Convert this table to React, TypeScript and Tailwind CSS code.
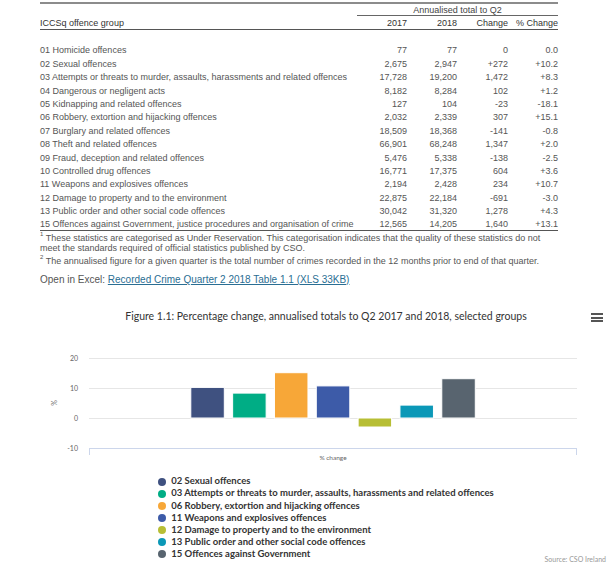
import React from "react";

const rows = [
  ["01 Homicide offences", "77", "77", "0", "0.0"],
  ["02 Sexual offences", "2,675", "2,947", "+272", "+10.2"],
  ["03 Attempts or threats to murder, assaults, harassments and related offences", "17,728", "19,200", "1,472", "+8.3"],
  ["04 Dangerous or negligent acts", "8,182", "8,284", "102", "+1.2"],
  ["05 Kidnapping and related offences", "127", "104", "-23", "-18.1"],
  ["06 Robbery, extortion and hijacking offences", "2,032", "2,339", "307", "+15.1"],
  ["07 Burglary and related offences", "18,509", "18,368", "-141", "-0.8"],
  ["08 Theft and related offences", "66,901", "68,248", "1,347", "+2.0"],
  ["09 Fraud, deception and related offences", "5,476", "5,338", "-138", "-2.5"],
  ["10 Controlled drug offences", "16,771", "17,375", "604", "+3.6"],
  ["11 Weapons and explosives offences", "2,194", "2,428", "234", "+10.7"],
  ["12 Damage to property and to the environment", "22,875", "22,184", "-691", "-3.0"],
  ["13 Public order and other social code offences", "30,042", "31,320", "1,278", "+4.3"],
  ["15 Offences against Government, justice procedures and organisation of crime", "12,565", "14,205", "1,640", "+13.1"],
];

const series = [
  { name: "02 Sexual offences", value: 10.2, color: "#3f5180" },
  { name: "03 Attempts or threats to murder, assaults, harassments and related offences", value: 8.3, color: "#00ad85" },
  { name: "06 Robbery, extortion and hijacking offences", value: 15.1, color: "#f7a738" },
  { name: "11 Weapons and explosives offences", value: 10.7, color: "#3d5ba8" },
  { name: "12 Damage to property and to the environment", value: -3.0, color: "#b7be35" },
  { name: "13 Public order and other social code offences", value: 4.3, color: "#0b98b7" },
  { name: "15 Offences against Government", value: 13.1, color: "#58646f" },
];

const grid = "grid grid-cols-[317px_50px_50px_51px_50px]";

function CrimeTable() {
  return (
    <div className="w-[518px] text-[9px] text-[#555] font-['Liberation_Sans',Arial,sans-serif]">
      <div className="mt-[2px] border-t-2 border-[#8c8c8c]" />
      <div className={grid}>
        <div />
        <div className="col-span-4 h-[12px] border-b border-[#666] text-center leading-[12px] text-[#444]">
          Annualised total to Q2
        </div>
      </div>
      <div className={`${grid} h-[14px] items-end border-b border-[#555] text-[#333] leading-[11px]`}>
        <div>ICCSq offence group</div>
        <div className="text-right">2017</div>
        <div className="text-right">2018</div>
        <div className="text-right">Change</div>
        <div className="text-right">% Change</div>
      </div>
      <div className="h-[13px]" />
      <div className="border-b border-[#555]">
        {rows.map((r) => (
          <div key={r[0]} className={`${grid} h-[13.4px] items-end leading-[12px]`}>
            <div className="whitespace-nowrap">{r[0]}</div>
            <div className="text-right">{r[1]}</div>
            <div className="text-right">{r[2]}</div>
            <div className="text-right">{r[3]}</div>
            <div className="text-right">{r[4]}</div>
          </div>
        ))}
      </div>
      <p className="mt-[1.5px] leading-[10px]">
        <sup className="text-[6px] leading-none align-[2px]">1</sup> These statistics are categorised as Under
        Reservation. This categorisation indicates that the quality of these statistics do not meet the standards
        required of official statistics published by CSO.
      </p>
      <p className="mt-[3px] leading-[10px]">
        <sup className="text-[6px] leading-none align-[2px]">2</sup> The annualised figure for a given quarter is the
        total number of crimes recorded in the 12 months prior to end of that quarter.
      </p>
      <p className="mt-[7px] text-[10px] leading-[13px] whitespace-nowrap">
        Open in Excel:{" "}
        <a href="#" className="text-[#2a6e93] underline">
          Recorded Crime Quarter 2 2018 Table 1.1 (XLS 33KB)
        </a>
      </p>
    </div>
  );
}

function Plot() {
  const ticks = [
    { label: "20", y: 9 },
    { label: "10", y: 39 },
    { label: "0", y: 69 },
  ];
  return (
    <svg width={572} height={115} className="block" fontFamily="Lato, sans-serif">
      {ticks.map((t) => (
        <g key={t.label}>
          <line x1={49} x2={537} y1={t.y + 0.5} y2={t.y + 0.5} stroke="#e6e6e6" />
          <text x={38} y={t.y + 2.5} fontSize={7} fill="#666" textAnchor="end">
            {t.label}
          </text>
        </g>
      ))}
      <text x={38} y={101.5} fontSize={7} fill="#666" textAnchor="end">
        -10
      </text>
      <text x={17} y={54} fontSize={7} fill="#666" textAnchor="middle" transform="rotate(-90 17 54)">
        %
      </text>
      <line x1={49} x2={537} y1={99.5} y2={99.5} stroke="#ccd6eb" />
      <line x1={49.5} x2={49.5} y1={99} y2={106} stroke="#ccd6eb" />
      <line x1={536.5} x2={536.5} y1={99} y2={106} stroke="#ccd6eb" />
      {series.map((s, i) => {
        const h = Math.abs(s.value) * 3;
        return (
          <rect
            key={s.name}
            x={150.8 + i * 41.83}
            y={s.value > 0 ? 69 - h : 69}
            width={33.5}
            height={h}
            fill={s.color}
            stroke="#fff"
            strokeWidth={1}
          />
        );
      })}
      <text x={293} y={110.5} fontSize={6.5} fill="#666" textAnchor="middle">
        % change
      </text>
    </svg>
  );
}

function Chart() {
  return (
    <div className="relative mt-[23.5px] w-[572px] font-['Lato',sans-serif]">
      <div className="text-center text-[10.5px] leading-[14px] text-[#333]">
        Figure 1.1: Percentage change, annualised totals to Q2 2017 and 2018, selected groups
      </div>
      <button className="absolute right-[9px] top-[4px] flex w-[12px] flex-col gap-[1.5px]" aria-label="Chart menu">
        <span className="h-[2px] w-full bg-[#555]" />
        <span className="h-[2px] w-full bg-[#555]" />
        <span className="h-[2px] w-full bg-[#555]" />
      </button>
      <div className="mt-[26px]">
        <Plot />
      </div>
      <div className="relative mt-[11px]">
        <ul className="mx-auto w-fit">
          {series.map((s) => (
            <li key={s.name} className="flex h-[12.1px] items-center gap-[5px] text-[9.5px] font-bold text-[#333]">
              <span className="h-[8px] w-[8px] rounded-full" style={{ backgroundColor: s.color }} />
              <span className="whitespace-nowrap">{s.name}</span>
            </li>
          ))}
        </ul>
        <div className="absolute bottom-[-4px] right-[6px] text-[7px] leading-[9px] text-[#999]">Source: CSO Ireland</div>
      </div>
    </div>
  );
}

export default function App() {
  return (
    <div className="h-[574px] w-[614px] overflow-hidden bg-white pl-[40px]">
      <CrimeTable />
      <Chart />
    </div>
  );
}
